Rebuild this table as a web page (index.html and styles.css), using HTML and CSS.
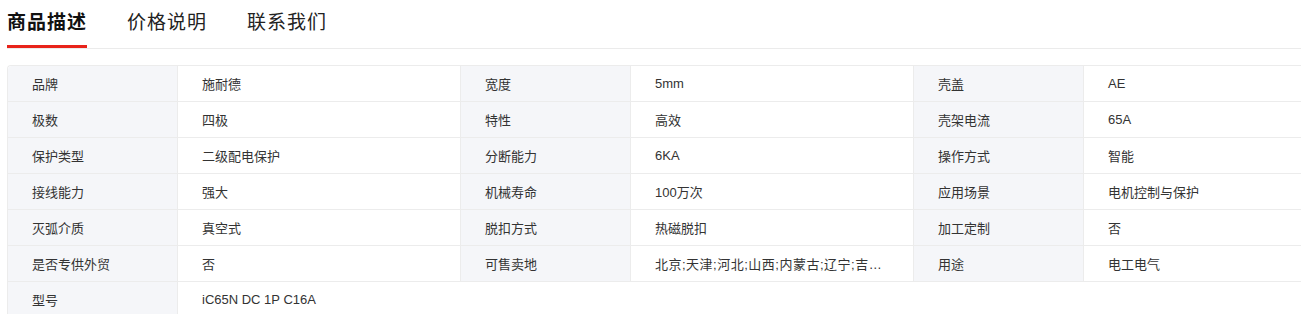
FILE: index.html
```html
<!DOCTYPE html>
<html lang="zh-CN">
<head>
<meta charset="utf-8">
<title>商品描述</title>
<link rel="stylesheet" href="styles.css">
</head>
<body>
<div class="page">
  <div class="tabs">
    <div class="tab active">商品描述</div>
    <div class="tab">价格说明</div>
    <div class="tab">联系我们</div>
  </div>
  <table class="spec">
    <colgroup>
      <col class="c-label"><col class="c-value">
      <col class="c-label"><col class="c-value">
      <col class="c-label"><col class="c-value">
    </colgroup>
    <tbody>
      <tr><th>品牌</th><td>施耐德</td><th>宽度</th><td>5mm</td><th>壳盖</th><td>AE</td></tr>
      <tr><th>极数</th><td>四极</td><th>特性</th><td>高效</td><th>壳架电流</th><td>65A</td></tr>
      <tr><th>保护类型</th><td>二级配电保护</td><th>分断能力</th><td>6KA</td><th>操作方式</th><td>智能</td></tr>
      <tr><th>接线能力</th><td>强大</td><th>机械寿命</th><td>100万次</td><th>应用场景</th><td>电机控制与保护</td></tr>
      <tr><th>灭弧介质</th><td>真空式</td><th>脱扣方式</th><td>热磁脱扣</td><th>加工定制</th><td>否</td></tr>
      <tr><th>是否专供外贸</th><td>否</td><th>可售卖地</th><td class="trunc">北京;天津;河北;山西;内蒙古;辽宁;吉林;黑龙江</td><th>用途</th><td>电工电气</td></tr>
      <tr class="last"><th>型号</th><td colspan="5">iC65N DC 1P C16A</td></tr>
    </tbody>
  </table>
</div>
</body>
</html>
```

FILE: styles.css
```css
html, body {
  margin: 0;
  padding: 0;
  background: #fff;
  overflow: hidden;
}
body {
  font-family: "Liberation Sans", "Noto Sans CJK SC", sans-serif;
  color: #333;
}
.page {
  padding-left: 7px;
  width: 1400px;
}
.tabs {
  display: flex;
  gap: 40px;
  height: 49px;
  border-bottom: 1px solid #ebebeb;
  box-sizing: border-box;
  width: 1294px;
}
.tab {
  font-size: 19px;
  letter-spacing: 1px;
  line-height: 45px;
  height: 48px;
  box-sizing: border-box;
  color: #222;
}
.tab.active {
  font-weight: bold;
  color: #111;
  border-bottom: 3px solid #e8231a;
}
.spec {
  margin-top: 16px;
  border-collapse: separate;
  border-spacing: 0;
  table-layout: fixed;
  width: 1359px;
  border-top: 1px solid #ececec;
  border-left: 1px solid #ececec;
  border-top-left-radius: 4px;
  font-size: 13px;
}
.c-label { width: 170px; }
.c-value { width: 283px; }
.spec th, .spec td {
  height: 35px;
  padding: 0 26px 0 24px;
  text-align: left;
  font-weight: normal;
  border-bottom: 1px solid #ececec;
  border-right: 1px solid #ececec;
  white-space: nowrap;
  overflow: hidden;
  text-overflow: ellipsis;
  color: #333;
}
.spec th {
  background: #f5f6f9;
}
.spec tr:first-child th:first-child {
  border-top-left-radius: 4px;
}
.spec td {
  background: #fff;
}
.spec td.trunc {
  letter-spacing: 0.5px;
}
.spec tr.last td {
  border-right: none;
}
```
